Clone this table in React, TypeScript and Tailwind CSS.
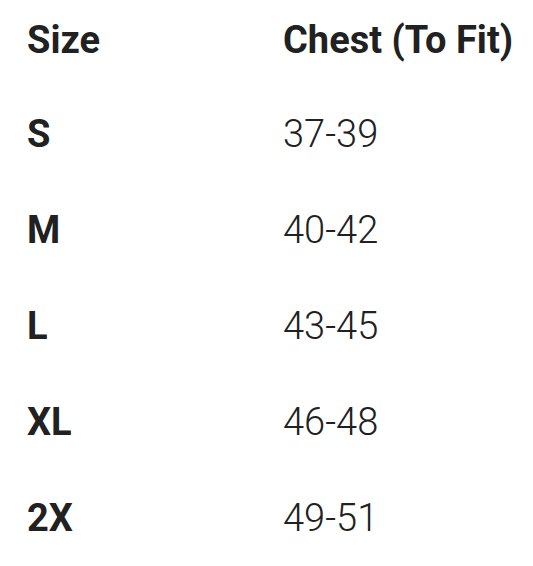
export default function App() {
  const rows = [
    ["S", "37-39"],
    ["M", "40-42"],
    ["L", "43-45"],
    ["XL", "46-48"],
    ["2X", "49-51"],
  ];
  return (
    <div
      className="w-[533px] h-[566px] bg-white text-[#212121] pl-[27px] pt-[16px]"
      style={{ fontFamily: "Roboto, 'Liberation Sans', sans-serif" }}
    >
      <div className="grid grid-cols-[256px_1fr] h-[94px] text-[38px] leading-[48px] font-bold">
        <div>Size</div>
        <div>Chest (To Fit)</div>
      </div>
      {rows.map(([s, c]) => (
        <div key={s} className="grid grid-cols-[256px_1fr] h-[96px] text-[38px] leading-[48px]">
          <div className="font-bold">{s}</div>
          <div className="font-light">{c}</div>
        </div>
      ))}
    </div>
  );
}
